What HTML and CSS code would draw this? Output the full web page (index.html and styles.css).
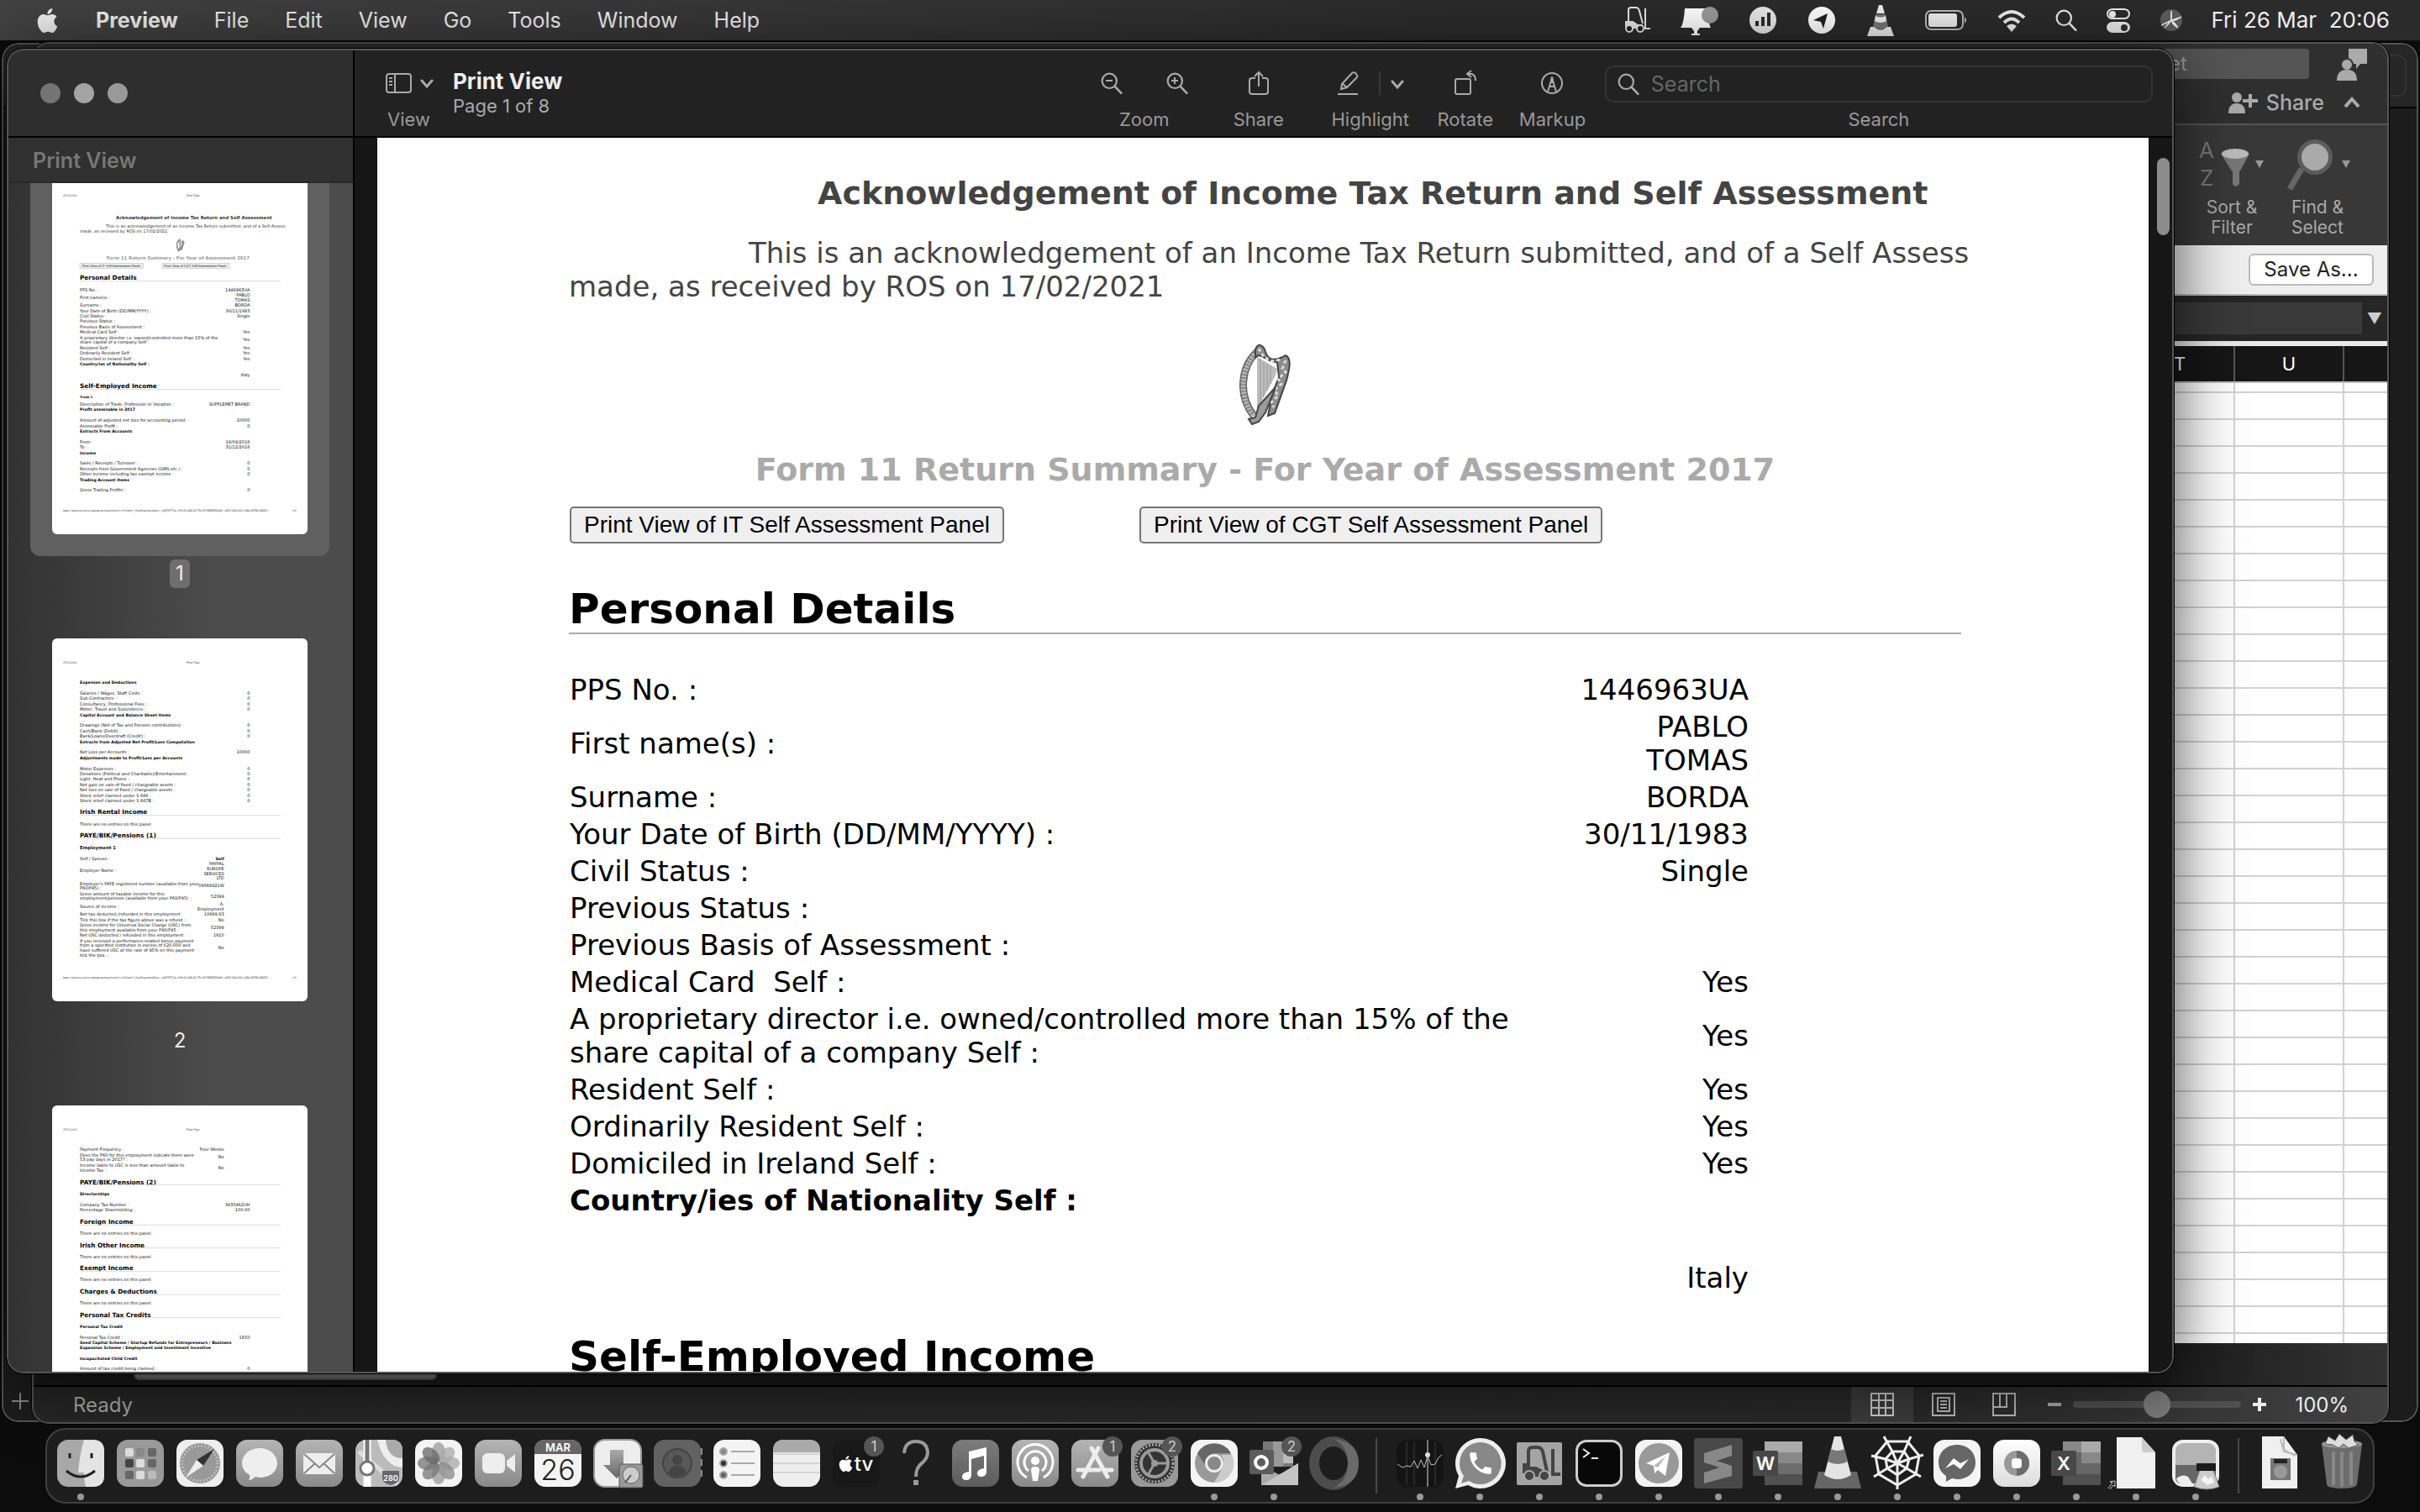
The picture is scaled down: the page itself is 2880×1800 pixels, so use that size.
FILE: index.html
```html
<!DOCTYPE html>
<html lang="en">
<head>
<meta charset="utf-8">
<title>Print View</title>
<link rel="stylesheet" href="styles.css">
</head>
<body>
<svg class="defs" aria-hidden="true">
  <defs>
    <linearGradient id="g-mid" x1="0" y1="0" x2="0" y2="1"><stop offset="0" stop-color="#b4b4b4"/><stop offset="1" stop-color="#8a8a8a"/></linearGradient>
    <linearGradient id="g-dim" x1="0" y1="0" x2="0" y2="1"><stop offset="0" stop-color="#7c7c7c"/><stop offset="1" stop-color="#5c5c5c"/></linearGradient>
    <linearGradient id="g-lite" x1="0" y1="0" x2="0" y2="1"><stop offset="0" stop-color="#fff"/><stop offset="1" stop-color="#dcdcdc"/></linearGradient>
    <linearGradient id="g-down" x1="0" y1="0" x2="0" y2="1"><stop offset="0" stop-color="#aaa"/><stop offset="1" stop-color="#666"/></linearGradient>
    <symbol id="apple" viewBox="0 0 24 24"><path d="M12.152 6.896c-.948 0-2.415-1.078-3.96-1.04-2.04.027-3.91 1.183-4.961 3.014-2.117 3.675-.546 9.103 1.519 12.09 1.013 1.454 2.208 3.09 3.792 3.039 1.52-.065 2.09-.987 3.935-.987 1.831 0 2.35.987 3.96.948 1.637-.026 2.676-1.48 3.676-2.948 1.156-1.688 1.636-3.325 1.662-3.415-.039-.013-3.182-1.221-3.22-4.857-.026-3.04 2.48-4.494 2.597-4.559-1.429-2.09-3.623-2.324-4.39-2.376-2-.156-3.675 1.09-4.61 1.09zM15.53 3.83c.843-1.012 1.4-2.427 1.245-3.83-1.207.052-2.662.805-3.532 1.818-.78.896-1.454 2.338-1.273 3.714 1.338.104 2.715-.688 3.559-1.701"/></symbol>
    <symbol id="lens" viewBox="0 0 24 24"><circle cx="9.500" cy="9.500" r="8" fill="none" stroke="currentColor" stroke-width="2"/><path d="M15.500 15.500 22.500 23" stroke="currentColor" stroke-width="2.400" stroke-linecap="round"/></symbol>
    <symbol id="harp" viewBox="0 0 60 100">
      <path d="M20 18V80L42 40 44 32Z" fill="#bdbdbd"/>
      <path d="M24 20v52M28 23v42M32 26v32M36 28v22" stroke="#999" fill="none"/>
      <path d="M20 12C2 28-4 62 16 88" fill="none" stroke="#666" stroke-width="9"/>
      <path d="M20 12C2 28-4 62 16 88" fill="none" stroke="#b5b5b5" stroke-width="6" stroke-dasharray="3 1"/>
      <path d="M18 9C21 0 28 4 30 12 34 24 44 22 54 16 62 20 58 34 55 46L41 85 33 88 38 62 46 42 44 24C30 24 26 12 18 18Z" fill="#8c8c8c" stroke="#444" stroke-width="2"/>
      <path d="M22 8l6 10 10 5 10-2M54 22l-4 10 4 4-9 8 4 6-8 7 4 7-8 8 3 6" fill="none" stroke="#ddd" stroke-width="3" stroke-dasharray="4 3"/>
      <path d="M22 76 18 90 10 92 14 98 22 95 30 84 42 54Z" fill="#9a9a9a" stroke="#444" stroke-width="2"/>
    </symbol>
  </defs>
</svg>

<header class="menubar">
  <nav class="menus" aria-label="Application menu">
    <button class="menu apple" aria-label="Apple"><svg width="29" height="31"><use href="#apple"/></svg></button>
    <button class="menu app">Preview</button>
    <button class="menu">File</button>
    <button class="menu">Edit</button>
    <button class="menu">View</button>
    <button class="menu">Go</button>
    <button class="menu">Tools</button>
    <button class="menu">Window</button>
    <button class="menu">Help</button>
  </nav>
  <div class="extras">
    <svg width="36" height="36" viewBox="0 0 36 36"><g fill="none" stroke="#e8e8e8" stroke-width="2"><path d="M8 21V6q0-3 3-3h6q3 0 4 4l4 15M5 26V20h8l6 4h6M28 4v24h6"/></g><path d="M5 20h8l6 4h5v4H5Z" fill="#e8e8e8"/><circle cx="9" cy="28" r="4" fill="#222" stroke="#e8e8e8" stroke-width="2"/><circle cx="22" cy="28" r="4" fill="#222" stroke="#e8e8e8" stroke-width="2"/></svg>
    <svg width="46" height="36" viewBox="0 0 46 36"><path d="M5 4h26q2 18 5 23H0Q4 22 5 4ZM13 27h10l-3 4v3h3v2H13v-2h3v-3Z" fill="#fff"/><circle cx="35" cy="12" r="10" fill="#999"/></svg>
    <svg width="36" height="36" viewBox="0 0 36 36"><circle cx="18" cy="18" r="16" fill="#e8e8e8"/><path d="M11 25v-6M18 25V14M25 25V9" stroke="#2c2c2c" stroke-width="4"/></svg>
    <svg width="36" height="36" viewBox="0 0 36 36"><circle cx="18" cy="18" r="16" fill="#fff"/><path d="M25 10 8 18l9 2 3 8Z" fill="#222"/></svg>
    <svg width="36" height="38" viewBox="0 0 36 38"><path d="M16 1h4l3 10h-10Z" fill="#eee"/><path d="m12 12-3 15q9 6 18 0l-3-15Z" fill="#777"/><path d="m12 14-1 6q7 4 14 0l-1-6q-6 3-12 0ZM6 27h4q8 7 16 0h4l4 11H2Z" fill="#eee"/></svg>
    <svg width="52" height="36" viewBox="0 0 52 36"><rect x="2" y="7" width="44" height="22" rx="6" fill="none" stroke="#bbb" stroke-width="2"/><rect x="5" y="10" width="34" height="16" rx="3" fill="#eee"/><path d="M48 14q4 4 0 8Z" fill="#bbb"/></svg>
    <svg width="36" height="32" viewBox="0 0 36 32"><g fill="none" stroke="#eee" stroke-width="4"><path d="M3 13q15-14 30 0M9 19q9-9 18 0"/></g><path d="M12 23q6-5 12 0l-6 7Z" fill="#eee"/></svg>
    <svg class="bright" width="26" height="26"><use href="#lens"/></svg>
    <svg width="30" height="32" viewBox="0 0 30 32"><rect x="2" y="3" width="26" height="11" rx="6" fill="none" stroke="#eee" stroke-width="2"/><circle cx="8" cy="9" r="4" fill="#eee"/><rect x="1" y="18" width="28" height="13" rx="7" fill="#eee"/><circle cx="22" cy="25" r="4" fill="#333"/></svg>
    <svg width="28" height="30" viewBox="0 0 28 30"><circle cx="14" cy="15" r="13" fill="#5c5c5c"/><path d="M2 21q9-3 12-6L26 11q-8 6-12 4 6 4 8 9-7-3-8-9-2 5-8 9 4-5 8-9-1-6 0-11 1 6 0 11Z" fill="#eee" stroke="#eee"/></svg>
    <time class="clock">Fri 26 Mar&nbsp; 20:06</time>
  </div>
</header>

<main class="desktop">
  <section class="window rear" aria-label="Background window">
    <div class="rear-bar"><span class="rear-field"></span></div>
    <span class="rear-plus"></span>
  </section>

  <section class="window sheet" aria-label="Spreadsheet">
    <div class="sheet-top">
      <div class="sheet-find"><span class="find-box">et</span>
        <svg width="36" height="38" viewBox="0 0 36 38"><path d="M14 0h22v18h-8l-5 6v-6h-9Z" fill="#aaa"/><circle cx="12" cy="19" r="7" fill="#aaa" stroke="#333" stroke-width="2"/><path d="M0 38q0-13 12-13t12 13Z" fill="#aaa"/></svg>
      </div>
      <div class="sheet-share">
        <svg width="36" height="26" viewBox="0 0 36 26"><circle cx="10" cy="7" r="6" fill="#aaa"/><path d="M0 26q0-12 10-12t10 12ZM17 9h18v4H17Z M24 3h4v16h-4Z" fill="#aaa"/></svg>
        <button class="plain share">Share</button>
        <svg width="20" height="14" viewBox="0 0 20 14"><path d="m2 12 8-9 8 9" fill="none" stroke="#aaa" stroke-width="4"/></svg>
      </div>
    </div>
    <div class="ribbon">
      <button class="plain rib">
        <svg width="80" height="66" viewBox="0 0 80 66"><text x="0" y="25" class="az">A</text><text x="1" y="58" class="az">Z</text><path d="M26 20q17-9 34 0L48 42v14q-5 6-8 0V42Z" fill="#777"/><ellipse cx="43" cy="20" rx="16" ry="6" fill="#bbb"/><path d="M67 28h10l-5 9Z" fill="#999"/></svg>
        Sort &amp;<br>Filter
      </button>
      <button class="plain rib">
        <svg width="80" height="66" viewBox="0 0 80 66"><path d="M20 38 6 62" stroke="#666" stroke-width="7"/><circle cx="36" cy="24" r="21" fill="#5c5c5c"/><circle cx="36" cy="24" r="16" fill="#aaa"/><path d="M68 28h10l-5 9Z" fill="#999"/></svg>
        Find &amp;<br>Select
      </button>
    </div>
    <div class="notice"><button class="save">Save As...</button></div>
    <div class="formula"><span class="formula-box"></span><span class="formula-arrow">▼</span></div>
    <div class="cols"><span class="col">T</span><span class="col">U</span><span class="col last"></span></div>
    <div class="cells"><div class="cells-right"></div></div>
    <div class="tabs"><span class="tab"></span></div>
    <footer class="status">
      <span class="ready">Ready</span>
      <button class="plain mode on" aria-label="Normal view"><svg width="28" height="28" viewBox="0 0 28 28"><path d="M1 1h26v26H1ZM1 9h26M1 18h26M10 1v26M18 1v26" fill="none" stroke="#ccc" stroke-width="2"/></svg></button>
      <button class="plain mode" aria-label="Page layout"><svg width="28" height="28" viewBox="0 0 28 28"><path d="M1 1h26v26H1ZM7 6h14v16H7ZM10 10h8M10 14h8M10 18h8" fill="none" stroke="#bbb" stroke-width="2"/></svg></button>
      <button class="plain mode" aria-label="Page break view"><svg width="28" height="28" viewBox="0 0 28 28"><path d="M1 1h26v26H1ZM1 17h16V1M9 1v16" fill="none" stroke="#bbb" stroke-width="2"/></svg></button>
      <span class="minus"></span>
      <input class="zoom" type="range" min="0" max="100" value="50" aria-label="Zoom">
      <svg class="plus" width="16" height="16" viewBox="0 0 16 16"><path d="M0 8h16M8 0v16" stroke="#eee" stroke-width="4"/></svg>
      <span class="percent">100%</span>
    </footer>
  </section>

  <section class="window preview" aria-label="Print View">
    <aside class="side">
      <div class="lights"><span class="light off"></span><span class="light"></span><span class="light mid"></span></div>
      <h2 class="side-title">Print View</h2>
      <div class="thumbs">
        <figure class="thumb selected">
          <div class="frame">
            <svg class="sheet-mini" viewBox="0 0 912 1296">
              <text x="39" y="89" class="s">25/03/2021</text><text x="480" y="89" class="s">Print View</text>
              <text x="228" y="171" class="m k">Acknowledgement of Income Tax Return and Self Assessment</text>
              <text x="192" y="201" class="k">This is an acknowledgement of an Income Tax Return submitted, and of a Self Assess</text>
              <text x="99" y="218" class="k">made, as received by ROS on 17/02/2021</text>
              <use href="#harp" x="442" y="240" width="32" height="47"/>
              <text x="194" y="314" class="m l">Form 11 Return Summary - For Year of Assessment 2017</text>
              <rect x="99" y="328" width="227" height="18" class="bt"/><text x="107" y="341" class="a">Print View of IT Self Assessment Panel</text>
              <rect x="394" y="328" width="239" height="18" class="bt"/><text x="400" y="341" class="a">Print View of CGT Self Assessment Panel</text>
              <text x="99" y="388" class="h">Personal Details</text><path d="M99 392H816"/>
              <text x="99" y="428">PPS No. :</text><text x="706" y="428" class="e">1446963UA</text>
              <text x="99" y="455">First name(s) :</text><text x="706" y="447" class="e">PABLO</text><text x="706" y="464" class="e">TOMAS</text>
              <text x="99" y="483">Surname :</text><text x="706" y="483" class="e">BORDA</text>
              <text x="99" y="503">Your Date of Birth (DD/MM/YYYY) :</text><text x="706" y="503" class="e">30/11/1983</text>
              <text x="99" y="521">Civil Status :</text><text x="706" y="521" class="e">Single</text>
              <text x="99" y="540">Previous Status :</text>
              <text x="99" y="560">Previous Basis of Assessment :</text>
              <text x="99" y="579">Medical Card  Self :</text><text x="706" y="579" class="e">Yes</text>
              <text x="99" y="599">A proprietary director i.e. owned/controlled more than 15% of the</text><text x="99" y="615">share capital of a company Self :</text><text x="706" y="606" class="e">Yes</text>
              <text x="99" y="635">Resident Self :</text><text x="706" y="635" class="e">Yes</text>
              <text x="99" y="654">Ordinarily Resident Self :</text><text x="706" y="654" class="e">Yes</text>
              <text x="99" y="674">Domiciled in Ireland Self :</text><text x="706" y="674" class="e">Yes</text>
              <text x="99" y="692" class="b">Country/ies of Nationality Self :</text>
              <text x="706" y="731" class="e">Italy</text>
              <text x="99" y="773" class="h">Self-Employed Income</text><path d="M99 779H816"/>
              <text x="99" y="810" class="c">Trade 1</text>
              <text x="99" y="837">Description of Trade, Profession or Vocation :</text><text x="706" y="837" class="e">SUPPLEMET BRAND</text>
              <text x="99" y="855" class="b">Profit assessable in 2017</text>
              <text x="99" y="894">Amount of adjusted net loss for accounting period :</text><text x="706" y="894" class="e">10000</text>
              <text x="99" y="914">Assessable Profit :</text><text x="706" y="914" class="e">0</text>
              <text x="99" y="933" class="b">Extracts From Accounts</text>
              <text x="99" y="971">From :</text><text x="706" y="971" class="e">16/09/2016</text>
              <text x="99" y="990">To :</text><text x="706" y="990" class="e">31/12/2016</text>
              <text x="99" y="1010" class="b">Income</text>
              <text x="99" y="1047">Sales / Receipts / Turnover :</text><text x="706" y="1047" class="e">0</text>
              <text x="99" y="1067">Receipts from Government Agencies (GMS etc.) :</text><text x="706" y="1067" class="e">0</text>
              <text x="99" y="1086">Other Income including tax exempt income :</text><text x="706" y="1086" class="e">0</text>
              <text x="99" y="1106" class="b">Trading Account Items</text>
              <text x="99" y="1143">Gross Trading Profits :</text><text x="706" y="1143" class="e">0</text>
              <text x="39" y="1216" class="s">https://www.ros.ie/ros-shared-services/form11-v38.html?_flowExecutionKey=_c6459F72A-3908-E2AB-DC7D-0F25BBFED480_AE9CDA11D-11BA-B59D-DDE5-…</text><text x="858" y="1216" class="s">1/8</text>
            </svg>
          </div>
          <figcaption class="num">1</figcaption>
        </figure>
        <figure class="thumb">
          <div class="frame">
            <svg class="sheet-mini" viewBox="0 0 912 1296">
              <text x="39" y="89" class="s">25/03/2021</text><text x="480" y="89" class="s">Print View</text>
              <text x="99" y="161" class="b">Expenses and Deductions</text>
              <text x="99" y="201">Salaries / Wages, Staff Costs :</text><text x="706" y="201" class="e">0</text>
              <text x="99" y="219">Sub-Contractors :</text><text x="706" y="219" class="e">0</text>
              <text x="99" y="239">Consultancy, Professional Fees :</text><text x="706" y="239" class="e">0</text>
              <text x="99" y="258">Motor, Travel and Subsistence :</text><text x="706" y="258" class="e">0</text>
              <text x="99" y="278" class="b">Capital Account and Balance Sheet Items</text>
              <text x="99" y="315">Drawings (Net of Tax and Pension contributions) :</text><text x="706" y="315" class="e">0</text>
              <text x="99" y="335">Cash/Bank (Debit) :</text><text x="706" y="335" class="e">0</text>
              <text x="99" y="354">Bank/Loans/Overdraft (Credit) :</text><text x="706" y="354" class="e">0</text>
              <text x="99" y="374" class="b">Extracts from Adjusted Net Profit/Loss Computation</text>
              <text x="99" y="411">Net Loss per Accounts :</text><text x="706" y="411" class="e">10000</text>
              <text x="99" y="431" class="b">Adjustments made to Profit/Loss per Accounts</text>
              <text x="99" y="470">Motor Expenses :</text><text x="706" y="470" class="e">0</text>
              <text x="99" y="489">Donations (Political and Charitable)/Entertainment :</text><text x="706" y="489" class="e">0</text>
              <text x="99" y="507">Light, Heat and Phone :</text><text x="706" y="507" class="e">0</text>
              <text x="99" y="527">Net gain on sale of fixed / chargeable assets :</text><text x="706" y="527" class="e">0</text>
              <text x="99" y="546">Net loss on sale of fixed / chargeable assets :</text><text x="706" y="546" class="e">0</text>
              <text x="99" y="566">Stock relief claimed under S 666 :</text><text x="706" y="566" class="e">0</text>
              <text x="99" y="585">Stock relief claimed under S 667B :</text><text x="706" y="585" class="e">0</text>
              <text x="99" y="628" class="h">Irish Rental Income</text><path d="M99 632H816"/>
              <text x="99" y="668">There are no entries on this panel</text>
              <text x="99" y="711" class="h">PAYE/BIK/Pensions (1)</text><path d="M99 715H816"/>
              <text x="99" y="753" class="m">Employment 1</text>
              <text x="99" y="791">Self / Spouse :</text><text x="614" y="791" class="e b">Self</text>
              <text x="99" y="834">Employer Name :</text><text x="614" y="809" class="e">PAYPAL</text><text x="614" y="827" class="e">EUROPE</text><text x="614" y="845" class="e">SERVICES</text><text x="614" y="861" class="e">LTD</text>
              <text x="99" y="881">Employer's PAYE registered number (available from your</text><text x="99" y="897">P60/P45) :</text><text x="614" y="888" class="e">09568421W</text>
              <text x="99" y="917">Gross amount of taxable income for this</text><text x="99" y="934">employment/pension (available from your P60/P45) :</text><text x="614" y="926" class="e">52399</text>
              <text x="99" y="962">Source of income :</text><text x="614" y="954" class="e">A.</text><text x="614" y="971" class="e">Employment</text>
              <text x="99" y="990">Net tax deducted /refunded in this employment :</text><text x="614" y="990" class="e">10699.63</text>
              <text x="99" y="1010">Tick this box if the tax figure above was a refund :</text><text x="614" y="1010" class="e">No</text>
              <text x="99" y="1029">Gross income for Universal Social Charge (USC) from</text><text x="99" y="1046">this employment available from your P60/P45 :</text><text x="614" y="1037" class="e">52399</text>
              <text x="99" y="1065">Net USC deducted / refunded in this employment :</text><text x="614" y="1065" class="e">1910</text>
              <text x="99" y="1085">If you received a performance-related bonus payment</text><text x="99" y="1101">from a specified institution in excess of €20,000 and</text><text x="99" y="1119">have suffered USC at the rate of 45% on this payment</text><text x="99" y="1136">tick the box. :</text><text x="614" y="1110" class="e">No</text>
              <text x="39" y="1216" class="s">https://www.ros.ie/ros-shared-services/form11-v38.html?_flowExecutionKey=_c6459F72A-3908-E2AB-DC7D-0F25BBFED480_AE9CDA11D-11BA-B59D-DDE5-…</text><text x="858" y="1216" class="s">2/8</text>
            </svg>
          </div>
          <figcaption class="num">2</figcaption>
        </figure>
        <figure class="thumb">
          <div class="frame">
            <svg class="sheet-mini" viewBox="0 0 912 1296">
              <text x="39" y="89" class="s">25/03/2021</text><text x="480" y="89" class="s">Print View</text>
              <text x="99" y="162">Payment Frequency :</text><text x="614" y="162" class="e">Four Weeks</text>
              <text x="99" y="182">Does the P60 for this employment indicate there were</text><text x="99" y="198">53 pay days in 2017? :</text><text x="614" y="189" class="e">No</text>
              <text x="99" y="218">Income liable to USC is less than amount liable to</text><text x="99" y="236">Income Tax :</text><text x="614" y="227" class="e">No</text>
              <text x="99" y="281" class="h">PAYE/BIK/Pensions (2)</text><path d="M99 284H816"/>
              <text x="99" y="321" class="b">Directorships</text>
              <text x="99" y="360">Company Tax Number :</text><text x="706" y="360" class="e">3435462UH</text>
              <text x="99" y="378">Percentage Shareholding :</text><text x="706" y="378" class="e">100.00</text>
              <text x="99" y="423" class="h">Foreign Income</text><path d="M99 427H816"/>
              <text x="99" y="462">There are no entries on this panel</text>
              <text x="99" y="506" class="h">Irish Other Income</text><path d="M99 509H816"/>
              <text x="99" y="545">There are no entries on this panel</text>
              <text x="99" y="588" class="h">Exempt Income</text><path d="M99 592H816"/>
              <text x="99" y="627">There are no entries on this panel</text>
              <text x="99" y="671" class="h">Charges &amp; Deductions</text><path d="M99 676H816"/>
              <text x="99" y="711">There are no entries on this panel</text>
              <text x="99" y="755" class="h">Personal Tax Credits</text><path d="M99 758H816"/>
              <text x="99" y="794" class="b">Personal Tax Credit</text>
              <text x="99" y="833">Personal Tax Credit :</text><text x="706" y="833" class="e">1650</text>
              <text x="99" y="851" class="b">Seed Capital Scheme / Startup Refunds for Entrepreneurs / Business</text>
              <text x="99" y="869" class="b">Expansion Scheme / Employment and Investment Incentive</text>
              <text x="99" y="908" class="b">Incapacitated Child Credit</text>
              <text x="99" y="945">Amount of tax credit being claimed :</text><text x="706" y="945" class="e">0</text>
            </svg>
          </div>
        </figure>
      </div>
    </aside>

    <div class="main">
      <div class="toolbar">
        <button class="plain tool view">
          <span class="icons"><svg width="56" height="26" viewBox="0 0 56 26"><rect x="1" y="2" width="29" height="22" rx="3" fill="none" stroke="#aaa" stroke-width="2"/><path d="M11 2v22M4 7h4M4 11h4M4 15h4" stroke="#aaa" stroke-width="2"/><path d="m43 10 6 7 6-7" fill="none" stroke="#aaa" stroke-width="3" stroke-linecap="round"/></svg></span>
          <span class="label">View</span>
        </button>
        <div class="doc-name"><h1 class="doc-title">Print View</h1><p class="doc-page">Page 1 of 8</p></div>
        <button class="plain tool zooms">
          <span class="icons"><svg width="26" height="26" viewBox="0 0 26 26"><use href="#lens" width="26" height="26"/><path d="M6 10h8" stroke="#aaa" stroke-width="2"/></svg><svg width="26" height="26" viewBox="0 0 26 26"><use href="#lens" width="26" height="26"/><path d="M6 10h8M10 6v8" stroke="#aaa" stroke-width="2"/></svg></span>
          <span class="label">Zoom</span>
        </button>
        <button class="plain tool send">
          <span class="icons"><svg width="26" height="30" viewBox="0 0 26 30"><path d="M9 9H5q-3 0-3 3v13q0 3 3 3h16q3 0 3-3V12q0-3-3-3h-4M13 19V2M8 7l5-5 5 5" fill="none" stroke="#aaa" stroke-width="2"/></svg></span>
          <span class="label">Share</span>
        </button>
        <button class="plain tool hilite">
          <span class="icons"><svg width="28" height="30" viewBox="0 0 28 30"><path d="m7 16 12-13q3-2 5 1t1 4L13 20l-7 2ZM8 16l5 4M2 28h24" fill="none" stroke="#aaa" stroke-width="2"/></svg><svg width="34" height="30" viewBox="0 0 34 30"><path d="M4 1v28" stroke="#383838" stroke-width="2"/><path d="m19 13 6 7 6-7" fill="none" stroke="#aaa" stroke-width="3" stroke-linecap="round"/></svg></span>
          <span class="label">Highlight</span>
        </button>
        <button class="plain tool rotate">
          <span class="icons"><svg width="28" height="30" viewBox="0 0 28 30"><rect x="2" y="10" width="18" height="18" rx="2" fill="none" stroke="#aaa" stroke-width="2"/><path d="M17 4h4q5 1 5 8M21 0l-5 4 5 4" fill="none" stroke="#aaa" stroke-width="2"/></svg></span>
          <span class="label">Rotate</span>
        </button>
        <button class="plain tool markup">
          <span class="icons"><svg width="28" height="28" viewBox="0 0 28 28"><circle cx="14" cy="14" r="12" fill="none" stroke="#aaa" stroke-width="2"/><path d="m9 24 5-16 5 16M11 18h6" fill="none" stroke="#aaa" stroke-width="2"/><path d="M14 7v7" stroke="#aaa" stroke-width="3"/></svg></span>
          <span class="label">Markup</span>
        </button>
        <div class="tool search">
          <div class="search-box"><svg width="26" height="26"><use href="#lens"/></svg><input id="find" class="search-input" type="search" placeholder="Search"></div>
          <label class="label" for="find">Search</label>
        </div>
      </div>

      <div class="viewer">
        <article class="page">
          <h2 class="ack">Acknowledgement of Income Tax Return and Self Assessment</h2>
          <p class="intro">This is an acknowledgement of an Income Tax Return submitted, and of a Self Assess<br>made, as received by ROS on 17/02/2021</p>
          <svg class="harp" width="62" height="100"><use href="#harp"/></svg>
          <h2 class="form-title">Form 11 Return Summary - For Year of Assessment 2017</h2>
          <div class="panels">
            <button class="panel">Print View of IT Self Assessment Panel</button>
            <button class="panel">Print View of CGT Self Assessment Panel</button>
          </div>
          <h2 class="section">Personal Details</h2>
          <table class="details">
            <tbody>
            <tr><th scope="row">PPS No. :</th><td>1446963UA</td></tr>
            <tr><th scope="row">First name(s) :</th><td>PABLO<br>TOMAS</td></tr>
            <tr><th scope="row">Surname :</th><td>BORDA</td></tr>
            <tr><th scope="row">Your Date of Birth (DD/MM/YYYY) :</th><td>30/11/1983</td></tr>
            <tr><th scope="row">Civil Status :</th><td>Single</td></tr>
            <tr><th scope="row">Previous Status :</th><td></td></tr>
            <tr><th scope="row">Previous Basis of Assessment :</th><td></td></tr>
            <tr><th scope="row">Medical Card&nbsp; Self :</th><td>Yes</td></tr>
            <tr><th scope="row">A proprietary director i.e. owned/controlled more than 15% of the share capital of a company Self :</th><td>Yes</td></tr>
            <tr><th scope="row">Resident Self :</th><td>Yes</td></tr>
            <tr><th scope="row">Ordinarily Resident Self :</th><td>Yes</td></tr>
            <tr><th scope="row">Domiciled in Ireland Self :</th><td>Yes</td></tr>
            <tr class="strong"><th scope="row">Country/ies of Nationality Self :</th><td></td></tr>
            <tr class="spaced"><th></th><td>Italy</td></tr>
            </tbody>
          </table>
          <h2 class="section">Self-Employed Income</h2>
        </article>
        <div class="gutter"><span class="scroll"></span></div>
      </div>
    </div>
  </section>

  <nav class="dock" aria-label="Dock">
    <button class="slot on" aria-label="Finder"><svg viewBox="0 0 64 64"><rect class="tile" fill="#a8a8a8"/><path d="M36 4h10q14 0 14 13v30q0 13-14 13H38q-2-8-2-17h-7Q31 20 36 4Z" fill="#e4e4e4"/><path d="M19 20v6M45 20v6" stroke="#222" stroke-width="3"/><path d="M15 41q17 14 34 0" fill="none" stroke="#222" stroke-width="3"/></svg></button>
    <button class="slot" aria-label="Launchpad"><svg viewBox="0 0 64 64"><rect class="tile" fill="#999"/><g fill="#ddd"><rect x="14" y="14" width="10" height="10" rx="2"/><rect x="27" y="14" width="10" height="10" rx="2" fill="#888"/><rect x="41" y="14" width="10" height="10" rx="2" fill="#666"/><rect x="14" y="27" width="10" height="10" rx="2" fill="#444"/><rect x="27" y="27" width="10" height="10" rx="2"/><rect x="41" y="27" width="10" height="10" rx="2" fill="#666"/><rect x="14" y="41" width="10" height="10" rx="2" fill="#666"/><rect x="27" y="41" width="10" height="10" rx="2"/><rect x="41" y="41" width="10" height="10" rx="2" fill="#bbb"/></g></svg></button>
    <button class="slot" aria-label="Safari"><svg viewBox="0 0 64 64"><rect class="tile" fill="#eee"/><circle cx="32" cy="32" r="24" fill="#999"/><circle cx="32" cy="32" r="21" fill="none" stroke="#ddd" stroke-width="3" stroke-dasharray="1 3"/><path d="M49 15 36 35l-8-7Z" fill="#333"/><path d="m15 49 13-21 8 7Z" fill="#eee"/></svg></button>
    <button class="slot" aria-label="Messages"><svg viewBox="0 0 64 64"><rect class="tile" fill="url(#g-mid)"/><path d="M32 14c12 0 21 8 21 18s-9 17-21 17l-5-1q-4 4-8 4 2-3 1-6-9-5-9-14c0-10 9-18 21-18Z" fill="#eee"/></svg></button>
    <button class="slot" aria-label="Mail"><svg viewBox="0 0 64 64"><rect class="tile" fill="url(#g-mid)"/><rect x="13" y="20" width="38" height="25" rx="3" fill="#eee"/><path d="m14 21 18 16 18-16M14 44l13-12M50 44 37 32" fill="none" stroke="#888" stroke-width="2"/></svg></button>
    <button class="slot" aria-label="Maps"><svg viewBox="0 0 64 64"><rect class="tile" fill="#bbb"/><path d="M30 4h16q14 0 14 13v20Q38 36 30 4Z" fill="#eee"/><path d="M40 4q2 22 20 22V17q0-13-14-13Z" fill="#aaa"/><path d="M8 18 54 57" stroke="#ddd" stroke-width="5"/><path d="M18 4v56" stroke="#fff" stroke-width="9"/><path d="M18 4v30" stroke="#777" stroke-width="5"/><circle cx="18" cy="38" r="8" fill="#fff" stroke="#777" stroke-width="3"/><path d="M36 41h20v8q0 7-10 9-10-2-10-9Z" fill="#666"/><text x="46" y="53" class="i9">280</text></svg></button>
    <button class="slot" aria-label="Photos"><svg viewBox="0 0 64 64"><rect class="tile" fill="#f4f4f4"/><g fill-opacity=".75"><ellipse cx="32" cy="19" rx="8" ry="12" fill="#999"/><ellipse cx="41" cy="23" rx="8" ry="12" transform="rotate(45 41 23)" fill="#aaa"/><ellipse cx="45" cy="32" rx="12" ry="8" fill="#aaa"/><ellipse cx="41" cy="41" rx="8" ry="12" transform="rotate(-45 41 41)" fill="#888"/><ellipse cx="32" cy="45" rx="8" ry="12" fill="#999"/><ellipse cx="23" cy="41" rx="8" ry="12" transform="rotate(45 23 41)" fill="#777"/><ellipse cx="19" cy="32" rx="12" ry="8" fill="#777"/><ellipse cx="23" cy="23" rx="8" ry="12" transform="rotate(-45 23 23)" fill="#666"/></g></svg></button>
    <button class="slot" aria-label="FaceTime"><svg viewBox="0 0 64 64"><rect class="tile" fill="url(#g-mid)"/><rect x="13" y="20" width="27" height="24" rx="6" fill="#eee"/><path d="m42 29 10-8v22l-10-8Z" fill="#eee"/></svg></button>
    <button class="slot" aria-label="Calendar"><svg viewBox="0 0 64 64"><rect class="tile" fill="#f4f4f4"/><path d="M4 21v-4Q4 4 17 4h30q13 0 13 13v4Z" fill="#666"/><text x="32" y="18" class="i13">MAR</text><text x="32" y="52" class="i32">26</text></svg></button>
    <button class="slot" aria-label="Installer"><svg viewBox="0 0 64 64"><rect class="tile" fill="#eee" stroke="#999" stroke-width="2"/><path d="M23 16h16v18h8L31 50 15 34h8Z" fill="url(#g-down)"/><rect x="34" y="33" width="28" height="28" rx="2" fill="#999" stroke="#555"/><circle cx="48" cy="46" r="10" fill="#ccc" stroke="#666"/><path d="m48 46-7 9" stroke="#555" stroke-width="2"/></svg></button>
    <button class="slot" aria-label="Contacts"><svg viewBox="0 0 64 64"><path d="M58 14h4v8h-4ZM58 27h4v8h-4ZM58 40h4v8h-4Z" fill="#888"/><rect class="tile" fill="#626262"/><circle cx="32" cy="32" r="17" fill="#585858" stroke="#444" stroke-width="2"/><circle cx="32" cy="28" r="6" fill="#444"/><path d="M21 43q3-8 11-8t11 8q-11 9-22 0Z" fill="#444"/></svg></button>
    <button class="slot" aria-label="Reminders"><svg viewBox="0 0 64 64"><rect class="tile" fill="#f4f4f4"/><g stroke="#aaa" stroke-width="2"><path d="M25 18h28M25 32h28M25 46h28"/><circle cx="16" cy="18" r="4" fill="#888"/><circle cx="16" cy="32" r="4" fill="#333"/><circle cx="16" cy="46" r="4" fill="#666"/></g></svg></button>
    <button class="slot" aria-label="Notes"><svg viewBox="0 0 64 64"><rect class="tile" fill="#eee"/><path d="M4 19v-2Q4 4 17 4h30q13 0 13 13v2Z" fill="#aaa"/><path d="M4 21h56M4 32h56M4 43h56" stroke="#bbb"/></svg></button>
    <button class="slot" aria-label="TV"><svg viewBox="0 0 64 64"><rect class="tile" fill="#181818"/><use href="#apple" x="10" y="23" width="19" height="19" fill="#fff"/><text x="41" y="41" class="i24">tv</text></svg><span class="badge">1</span></button>
    <button class="slot" aria-label="Unknown application"><svg viewBox="0 0 64 64"><path d="M18 20q1-14 14-14t14 13q0 7-7 13-7 5-7 16" fill="none" stroke="#999" stroke-width="4"/><path d="M29 52h6v6h-6Z" fill="#999"/></svg></button>
    <button class="slot" aria-label="Music"><svg viewBox="0 0 64 64"><rect class="tile" fill="url(#g-dim)"/><path d="m24 18 21-5v30q-1 5-6 5-5 0-5-4 0-5 8-6V23l-15 4v20q-1 5-6 5-5 0-5-4 0-5 8-6Z" fill="#fff"/></svg></button>
    <button class="slot" aria-label="Podcasts"><svg viewBox="0 0 64 64"><rect class="tile" fill="url(#g-mid)"/><g fill="none" stroke="#fff" stroke-width="3"><path d="M22 49a21 21 0 1 1 20 0M24 41a13 13 0 1 1 16 0"/></g><circle cx="32" cy="29" r="5" fill="#fff"/><path d="M27 40q0-4 5-4t5 4l-2 13h-6Z" fill="#fff"/></svg></button>
    <button class="slot" aria-label="App Store"><svg viewBox="0 0 64 64"><rect class="tile" fill="url(#g-mid)"/><path d="m36 14-18 34M28 14l19 34M12 40h25M43 40h9" stroke="#eee" stroke-width="5" stroke-linecap="round"/></svg><span class="badge">1</span></button>
    <button class="slot" aria-label="System Preferences"><svg viewBox="0 0 64 64"><rect class="tile" fill="#999"/><circle cx="32" cy="32" r="24" fill="#333"/><circle cx="32" cy="32" r="22" fill="none" stroke="#aaa" stroke-width="3" stroke-dasharray="2 2"/><circle cx="32" cy="32" r="16" fill="none" stroke="#999" stroke-width="4"/><path d="M32 32h16M32 32l-8-14M32 32l-8 14" stroke="#999" stroke-width="3"/><circle cx="32" cy="32" r="4" fill="#999"/></svg><span class="badge">2</span></button>
    <button class="slot on" aria-label="Chrome"><svg viewBox="0 0 64 64"><rect class="tile" fill="#f4f4f4"/><circle cx="32" cy="32" r="23" fill="#999"/><path d="M12 20A23 23 0 0 1 52 20H32Q22 22 21 34Z" fill="#666"/><path d="M53 22a23 23 0 0 1-21 33l10-18q4-8-2-15Z" fill="#ccc"/><circle cx="32" cy="32" r="11" fill="#eee"/><circle cx="32" cy="32" r="8" fill="#888"/></svg></button>
    <button class="slot on" aria-label="Outlook"><svg viewBox="0 0 64 64"><path d="M19 6h36v30H19Z" fill="#777"/><path d="M31 6h12v30H31Z" fill="#999"/><path d="M43 18h12v14H43Z" fill="#bbb"/><path d="M17 34l22 12 22-14v26H17Z" fill="#aaa"/><path d="m17 58 44-26v26Z" fill="#c4c4c4"/><rect x="3" y="16" width="29" height="29" rx="2" fill="#5c5c5c"/><circle cx="17" cy="31" r="7" fill="none" stroke="#fff" stroke-width="4"/></svg><span class="badge">2</span></button>
    <button class="slot" aria-label="Opera"><svg viewBox="0 0 64 64"><ellipse cx="32" cy="32" rx="23" ry="26" fill="none" stroke="#4c4c4c" stroke-width="12"/><path d="M32 3q30 3 30 29T32 61q17-8 17-29T32 3Z" fill="#6a6a6a"/></svg></button>
    <span class="divider"></span>
    <button class="slot on" aria-label="Activity"><svg viewBox="0 0 64 64"><rect class="tile" fill="#141414"/><path d="M41 4v56M16 6v52M25 6v52M50 6v52" stroke="#3a3a3a"/><path d="M41 4v56" stroke="#777" stroke-width="2"/><path d="m5 33 6 4 5-2 5 1 4-7 4 9 4-10 4 9 4-14 4 11 5-1 4-8 4-3" fill="none" stroke="#bbb"/><circle cx="41" cy="22" r="3" fill="#ddd"/></svg></button>
    <button class="slot on" aria-label="WhatsApp"><svg viewBox="0 0 64 64"><path d="M33 2a30 30 0 1 1-15 56L3 62l4-15A30 30 0 0 1 33 2Z" fill="#eee"/><path d="M33 7a25 25 0 1 1-14 46l-9 3 3-9A25 25 0 0 1 33 7Z" fill="#888"/><svg x="16" y="15" width="34" height="34" viewBox="0 0 24 24"><path d="M6.620 10.790c1.440 2.830 3.760 5.140 6.590 6.590l2.200-2.200c.27-.27.67-.36 1.020-.24 1.120.37 2.330.57 3.570.57.55 0 1 .45 1 1V20c0 .55-.45 1-1 1-9.390 0-17-7.610-17-17 0-.55.45-1 1-1h3.500c.55 0 1 .45 1 1 0 1.250.2 2.450.57 3.570.11.35.03.74-.25 1.020z" fill="#fff"/></svg></svg></button>
    <button class="slot on" aria-label="Forklift"><svg viewBox="0 0 64 64"><rect x="5" y="7" width="54" height="51" rx="2" fill="#a4a4a4"/><path d="M19 34V18q0-5 5-5h6q4 0 6 5l5 24H14v-8ZM48 15v30h9" fill="none" stroke="#444" stroke-width="4"/><path d="M14 36h14l12 6v6H14Z" fill="#444"/><circle cx="20" cy="47" r="6" fill="#444" stroke="#aaa" stroke-width="2"/><circle cx="38" cy="47" r="6" fill="#444" stroke="#aaa" stroke-width="2"/></svg></button>
    <button class="slot on" aria-label="Terminal"><svg viewBox="0 0 64 64"><rect class="tile" fill="#ccc"/><rect x="7" y="7" width="50" height="50" rx="10" fill="#080808"/><path d="m13 15 7 5-7 5M23 26h8" fill="none" stroke="#eee" stroke-width="2"/></svg></button>
    <button class="slot on" aria-label="Telegram"><svg viewBox="0 0 64 64"><rect class="tile" fill="#f4f4f4"/><circle cx="32" cy="32" r="24" fill="#999"/><path d="m17 32 28-13-5 28-9-7-4 4-1-9Z" fill="#fff"/><path d="m26 35 15-12-10 14Z" fill="#bbb"/></svg></button>
    <button class="slot on" aria-label="Sublime Text"><svg viewBox="0 0 64 64"><rect x="3" y="2" width="58" height="60" rx="4" fill="#484848"/><path d="M48 10v13L30 29l18 6v12L15 56V43l18-6-18-6V20Z" fill="#888"/></svg></button>
    <button class="slot on" aria-label="Word"><svg viewBox="0 0 64 64"><path d="M16 6h45v13H16Z" fill="#aaa"/><path d="M16 19h45v13H16Z" fill="#888"/><path d="M16 32h45v13H16Z" fill="#6c6c6c"/><path d="M16 45h45v13H16Z" fill="#505050"/><rect x="2" y="17" width="30" height="30" rx="2" fill="#484848"/><text x="17" y="40" class="i22">W</text></svg></button>
    <button class="slot on" aria-label="VLC"><svg viewBox="0 0 64 64"><path d="M9 42h46l5 20H4Z" fill="#666"/><path d="M28 0h8l12 46q-16 10-32 0Z" fill="#e4e4e4"/><path d="m24 15-4 15q12 6 24 0l-4-15q-8 4-16 0Z" fill="#777"/></svg></button>
    <button class="slot on" aria-label="Spider"><svg viewBox="0 0 64 64"><g fill="none" stroke="#eee" stroke-width="3"><path d="m20 6 24 0 14 17-4 22-22 13-22-13-4-22Z"/><path d="m26 18 14 0 6 9-3 11-11 8-12-8-2-11ZM16 0l10 18 6 14M48 0l-8 18-8 14M1 23l17 4 14 5M63 22l-17 5-14 5M4 48l16-10 12-6M60 48 43 38l-11-6M32 63V32"/></g></svg></button>
    <button class="slot on" aria-label="Messenger"><svg viewBox="0 0 64 64"><rect class="tile" fill="#f4f4f4"/><path d="M32 10c13 0 22 9 22 21S45 51 32 51l-6-1-7 4v-7C13 43 10 38 10 31c0-12 9-21 22-21Z" fill="#666"/><path d="m18 38 10-12 8 6 10-5-10 12-8-6Z" fill="#fff"/></svg></button>
    <button class="slot on" aria-label="Recorder"><svg viewBox="0 0 64 64"><rect class="tile" fill="url(#g-lite)"/><circle cx="32" cy="32" r="15" fill="#999"/><path d="M32 17a15 15 0 0 1 0 30Z" fill="#6c6c6c"/><rect x="26" y="26" width="12" height="12" rx="4" fill="#fff"/></svg></button>
    <button class="slot on" aria-label="Excel"><svg viewBox="0 0 64 64"><path d="M16 6h45v52H16Z" fill="#666"/><path d="M16 6h22v13H16Z" fill="#888"/><path d="M38 6h23v13H38Z" fill="#aaa"/><path d="M38 19h23v13H38Z" fill="#888"/><path d="M16 45h45v13H16Z" fill="#505050"/><rect x="2" y="17" width="30" height="30" rx="2" fill="#484848"/><text x="17" y="40" class="i22">X</text></svg></button>
    <button class="slot on" aria-label="Document"><svg viewBox="0 0 64 64"><path d="M9 1h30l16 18v43H9Z" fill="#f0f0f0"/><path d="M39 1v15q0 3 3 3h13Z" fill="#ccc"/><path d="m-1 62 5-7-3-1 6-1v7l-2-2-4 5" fill="none" stroke="#ccc"/></svg></button>
    <button class="slot on" aria-label="Preview"><svg viewBox="0 0 64 64"><rect class="tile" fill="#eee"/><rect x="8" y="8" width="48" height="48" rx="9" fill="#b4b4b4"/><path d="M8 34h48v16q0 6-8 6H16q-8 0-8-6Z" fill="#666"/><path d="M9 50q8-6 14-2l5 8H16q-6 0-7-6Z" fill="#eee"/><path d="M37 40h16l7 20q-15 6-30 0Z" fill="#ccc" stroke="#777"/><path d="m38 52 5-6 4 5 4-4 3 8-8 3Z" fill="#f4f4f4"/><path d="M33 32h23v9H33Z" fill="#1a1a1a"/></svg></button>
    <span class="divider"></span>
    <button class="slot" aria-label="Downloads"><svg viewBox="0 0 64 64"><path d="M8 0h26l16 22v40H8Z" fill="#f0f0f0"/><path d="M34 0v18l16 4M30 3l3 12 14 8" fill="none" stroke="#bbb" stroke-width="2"/><path d="M18 26h24v26H18Z" fill="#777"/><path d="M22 27h16v5H22Z" fill="#222"/><circle cx="30" cy="42" r="8" fill="#999"/></svg></button>
    <button class="slot" aria-label="Trash"><svg viewBox="0 0 64 64"><path d="M8 9h48l-6 48q-1 5-18 5t-18-5Z" fill="#6c6c6c"/><path d="M22 18v40M32 18v42M43 18v40" stroke="#888" stroke-width="4"/><ellipse cx="32" cy="9" rx="24" ry="5" fill="#999"/><path d="m12 9 4-9 8 5 5-8 8 7 8-6 2 8 5 4-12 4-6-5-6 5-7-4Z" fill="#ddd" stroke="#555"/></svg></button>
  </nav>
</main>
</body>
</html>
```
FILE: styles.css
```css
* { box-sizing: border-box; }
body {
  margin: 0;
  height: 100vh;
  display: flex;
  flex-direction: column;
  overflow: hidden;
  background: #0c0c0c;
  color: #eee;
  font-family: Inter, "Liberation Sans", sans-serif;
}
h1, h2, p, figure { margin: 0; }
button, input { font: inherit; color: inherit; }
svg { display: block; flex: none; overflow: visible; }
.defs { position: absolute; width: 0; height: 0; }
.plain { border: 0; padding: 0; background: none; }

/* Menu bar */
.menubar {
  height: 48px;
  flex: none;
  display: flex;
  align-items: center;
  justify-content: space-between;
  padding: 0 36px 0 42px;
  background: linear-gradient(90deg, #424242, #2b2b2b 60%);
  font-size: 25px;
}
.menus { display: flex; gap: 43px; align-items: center; }
.menu { border: 0; padding: 0; background: none; line-height: 46px; }
.menu.apple svg { fill: #eee; }
.menu.app { font-weight: 700; }
.extras { display: flex; align-items: center; gap: 34px; }
.bright { color: #eee; }
.clock { font-size: 26px; line-height: 46px; white-space: nowrap; }

/* Windows */
.desktop { position: relative; flex: 1; min-height: 0; }
.window {
  position: absolute;
  border: 2px solid #555;
  outline: 1px solid #000;
  border-radius: 20px;
  overflow: hidden;
}
.rear { inset: 3px 2px 107px 2px; background: #1c1c1c; }
.rear-bar { height: 76px; display: flex; justify-content: flex-end; padding: 12px; border-bottom: 2px solid #000; background: #262626; }
.rear-field { width: 400px; height: 50px; border: 2px solid #333; border-radius: 10px; }
.rear-plus {
  position: absolute;
  left: 10px;
  bottom: 13px;
  width: 20px;
  height: 20px;
  background: linear-gradient(#888, #888) center / 20px 2px no-repeat, linear-gradient(#888, #888) center / 2px 20px no-repeat;
}

.sheet { inset: 2px 37px 105px 38px; display: flex; flex-direction: column; background: #1f1f1f; color: #aaa; }
.sheet-top { flex: none; height: 97px; background: #2f2f2f; border-bottom: 2px solid #555; }
.sheet-find { display: flex; justify-content: flex-end; gap: 33px; padding: 6px 24px 0 0; }
.find-box { width: 400px; height: 36px; padding-left: 233px; border-radius: 4px; background: #555; color: #999; font-size: 24px; line-height: 36px; }
.sheet-share { display: flex; justify-content: flex-end; align-items: center; gap: 9px; padding: 8px 32px 0 0; }
.share { font-size: 25px; font-weight: 500; line-height: 36px; }
.sheet-share svg:last-child { margin-left: 14px; }
.ribbon { flex: none; height: 143px; display: flex; justify-content: flex-end; gap: 24px; padding: 14px 44px 0 0; background: #383838; }
.rib { width: 78px; align-self: flex-start; font-size: 21px; line-height: 24px; color: #aaa; white-space: nowrap; }
.rib svg { margin-bottom: 6px; }
.az { font-size: 26px; fill: #777; }
.notice { flex: none; height: 60px; display: flex; justify-content: flex-end; align-items: center; padding-right: 16px; background: #efefef; border-bottom: 2px solid #bbb; }
.save { width: 149px; height: 38px; border: 2px solid #bbb; border-radius: 6px; padding: 0; background: #fff; color: #222; font-size: 24px; line-height: 30px; }
.formula { flex: none; height: 54px; display: flex; align-items: center; padding: 0 6px 0 0; background: #262626; }
.formula-box { flex: 1; height: 38px; background: #393939; }
.formula-arrow { width: 24px; text-align: right; font-size: 18px; color: #ccc; }
.cols { flex: none; height: 50px; display: flex; justify-content: flex-end; border-top: 6px solid #e8e8e8; border-bottom: 2px solid #bbb; background: #161616; }
.col { width: 130px; border-right: 2px solid #555; text-align: center; font-size: 22px; line-height: 42px; color: #fff; }
.col.last { width: 51px; border: 0; }
.cells {
  flex: 1;
  display: flex;
  justify-content: flex-end;
  background: repeating-linear-gradient(#fff 0 10px, #d2d2d2 10px 12px, #fff 12px 32px);
}
.cells-right { width: 183px; border-left: 2px solid #d2d2d2; background: linear-gradient(#d2d2d2, #d2d2d2) 128px 0 / 2px 100% no-repeat; }
.tabs { flex: none; height: 52px; padding-left: 119px; background: linear-gradient(90deg, #1a1a1a 90%, #333); border-bottom: 2px solid #000; display: flex; }
.tab { width: 361px; height: 44px; border: 2px solid #555; border-radius: 0 0 6px 6px; background: #777; }
.status { flex: none; height: 42px; display: flex; align-items: center; padding-right: 46px; background: linear-gradient(90deg, #262626, #292929 80%, #404040); }
.ready { flex: 1; padding-left: 47px; font-size: 24px; }
.mode { width: 72px; height: 42px; display: flex; align-items: center; justify-content: center; }
.mode.on { background: #3c3c3c; width: 74px; }
.minus { width: 16px; height: 4px; margin: 0 14px 0 16px; background: #aaa; }
.zoom { appearance: none; width: 200px; height: 8px; margin: 0 14px 0 0; border-radius: 4px; background: #505050; }
.zoom::-webkit-slider-thumb { appearance: none; width: 32px; height: 32px; border-radius: 50%; background: #7c7c7c; }
.percent { margin-left: 34px; font-size: 24px; color: #eee; }

/* Preview window */
.preview {
  inset: 10px 293px 165px 8px;
  display: grid;
  grid-template-columns: 412px 1fr;
  background: #161616;
  box-shadow: 0 10px 80px rgba(0, 0, 0, .7);
}
.side {
  min-height: 0;
  display: flex;
  flex-direction: column;
  border-right: 2px solid #000;
  background: linear-gradient(90deg, #323232, #4c4c4c 60%);
}
.lights { flex: none; height: 104px; display: flex; align-items: center; gap: 16px; padding-left: 38px; background: #2e2e2e; border-bottom: 2px solid #000; }
.light { width: 24px; height: 24px; border-radius: 50%; background: #a4a4a4; }
.light.off { background: #747474; }
.light.mid { background: #999; }
.side-title { flex: none; padding-left: 29px; font-size: 25px; font-weight: 600; line-height: 54px; height: 54px; color: #777; background: #303030; border-bottom: 2px solid #292929; }
.thumbs { flex: 1; min-height: 0; overflow: hidden; padding-left: 26px; }
.thumb { width: 356px; height: 556px; }
.thumb:first-child { margin-top: -40px; }
.frame { height: 484px; padding: 26px; border-radius: 12px; }
.selected .frame { background: #606060; }
.num { width: 24px; height: 34px; margin: 4px auto 0; border-radius: 6px; text-align: center; font-size: 24px; line-height: 34px; }
.selected .num { background: #6e6e6e; }
.sheet-mini { width: 304px; height: 432px; border-radius: 6px; background: #fff; overflow: hidden; font-family: "DejaVu Sans", sans-serif; font-size: 15px; fill: #111; text-rendering: geometricPrecision; }
.sheet-mini path { stroke: #ccc; stroke-width: 2; }
.sheet-mini .s { font: 11px "Liberation Serif", serif; fill: #222; }
.sheet-mini .a { font: 12px "Liberation Sans", sans-serif; }
.sheet-mini .m { font-size: 16px; font-weight: 700; }
.sheet-mini .k { fill: #333; }
.sheet-mini .l { fill: #999; }
.sheet-mini .h { font-size: 22px; font-weight: 700; fill: #000; }
.sheet-mini .b { font-size: 14px; font-weight: 700; fill: #000; }
.sheet-mini .c { font-size: 11px; font-weight: 700; }
.sheet-mini .e { text-anchor: end; }
.sheet-mini .bt { fill: #eee; stroke: #999; }

.main { min-width: 0; min-height: 0; display: flex; flex-direction: column; }
.toolbar { flex: none; height: 104px; display: flex; gap: 24px; padding: 16px 23px 0 36px; background: #222; border-bottom: 2px solid #000; color: #aaa; }
.tool { flex: none; align-self: flex-start; }
.icons { height: 46px; display: flex; align-items: center; justify-content: center; }
.label { display: block; margin-top: 6px; text-align: center; font-size: 22px; line-height: 28px; color: #999; }
.view { width: 57px; }
.doc-name { flex: 1; padding-top: 6px; }
.doc-title { font-size: 26px; font-weight: 700; line-height: 30px; color: #eee; }
.doc-page { font-size: 22px; line-height: 28px; }
.zooms { width: 104px; }
.zooms .icons { justify-content: space-between; }
.send { width: 120px; }
.hilite { width: 98px; }
.hilite .icons { gap: 20px; }
.rotate { width: 80px; }
.markup { width: 78px; }
.search { width: 31%; }
.search-box { height: 44px; margin: 2px 0 0; display: flex; align-items: center; gap: 14px; padding: 0 13px; border: 2px solid #333; border-radius: 10px; }
.search-input { flex: 1; border: 0; padding: 0; outline: 0; background: none; font-size: 25px; }
.search-input::placeholder { color: #666; opacity: 1; }

.viewer { flex: 1; min-height: 0; display: flex; padding-left: 27px; background: #161616; }
.page {
  flex: 1;
  overflow: hidden;
  padding: 42px 223px 0 228px;
  background: #fff;
  color: #000;
  font-family: "DejaVu Sans", sans-serif;
  font-size: 34px;
  line-height: 40px;
}
.ack { padding-left: 296px; font-size: 38px; line-height: 48px; color: #444; white-space: nowrap; }
.intro { margin-top: 27px; text-indent: 214px; color: #444; white-space: nowrap; }
.harp { margin: 46px auto 0; }
.form-title { margin-top: 28px; font-size: 38px; line-height: 48px; text-align: center; color: #aaa; white-space: nowrap; }
.panels { display: flex; gap: 161px; margin: 20px 0 0 1px; }
.panel { height: 44px; padding: 0 15px; border: 2px solid #767676; border-radius: 5px; background: #efefef; color: #000; font-family: "Liberation Sans", Arial, sans-serif; font-size: 28px; line-height: 38px; white-space: nowrap; }
.section { margin-top: 50px; border-bottom: 2px solid #aaa; font-size: 50px; line-height: 56px; }
.details { width: 1404px; margin: 44px 0 -6px; border-collapse: collapse; }
.details th, .details td { height: 44px; padding: 2px 0; vertical-align: middle; }
.details th { width: 1170px; padding-left: 1px; text-align: left; font-weight: 400; }
.details td { text-align: right; }
.details .strong th { font-weight: 700; }
.details .spaced td { padding-top: 50px; }
.gutter { flex: none; width: 28px; padding: 24px 3px 0 10px; }
.scroll { display: block; height: 92px; border-radius: 8px; background: #8c8c8c; }

/* Dock */
.dock {
  position: absolute;
  left: 50%;
  bottom: 10px;
  transform: translateX(-50%);
  display: flex;
  padding: 8px 2px 2px 4px;
  border: 2px solid #404040;
  border-radius: 24px;
  background: #1d1d1d;
}
.slot { position: relative; width: 71px; height: 76px; padding: 0; border: 0; background: none; display: flex; flex-direction: column; align-items: center; gap: 4px; }
.slot svg { width: 64px; height: 64px; }
.slot svg svg { width: 34px; height: 34px; }
.slot.on::after { content: ""; width: 8px; height: 8px; border-radius: 50%; background: #999; }
.tile { x: 4px; y: 4px; width: 56px; height: 56px; rx: 13px; }
.badge { position: absolute; right: 2px; top: 0; width: 24px; height: 24px; border-radius: 50%; background: #555; color: #ccc; font-size: 17px; line-height: 24px; text-align: center; }
.divider { width: 2px; margin: 2px 15px 8px; background: #484848; }
.i9, .i13, .i24, .i22, .i32 { text-anchor: middle; fill: #fff; font-weight: 600; }
.i9 { font-size: 9px; }
.i13 { font-size: 13px; }
.i22 { font-size: 22px; }
.i24 { font-size: 24px; font-weight: 500; }
.i32 { font-size: 34px; font-weight: 300; fill: #222; }
```
